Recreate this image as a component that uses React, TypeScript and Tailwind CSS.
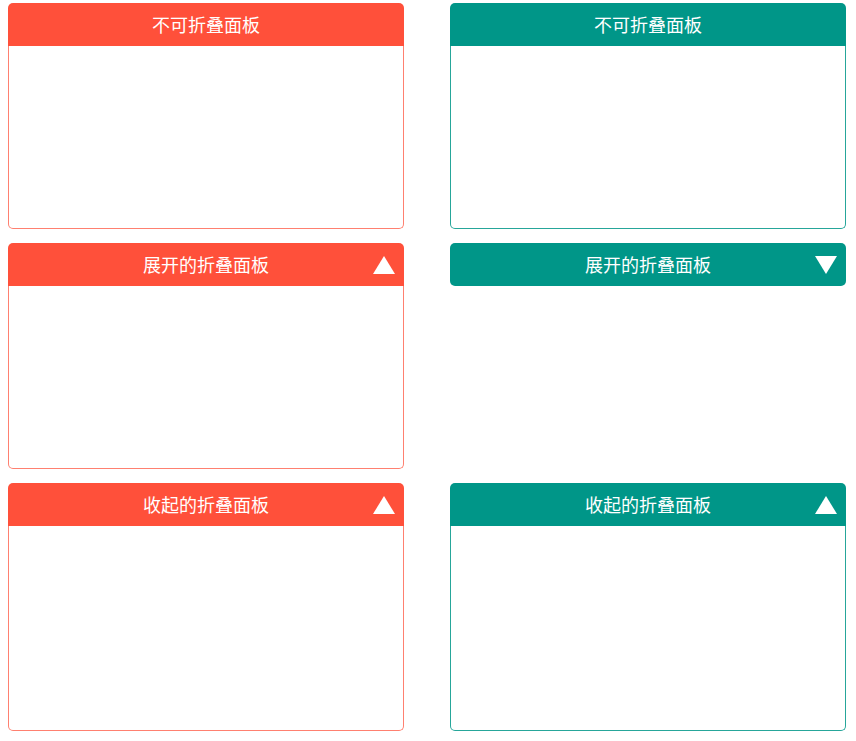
import React from 'react';

type Tone = 'red' | 'teal';

const TONES: Record<Tone, { head: string; border: string }> = {
  red: { head: 'bg-[#ff503a]', border: 'border-[#ff8070]' },
  teal: { head: 'bg-[#009688]', border: 'border-[#26a69a]' },
};

function Arrow({ dir }: { dir: 'up' | 'down' }) {
  return (
    <svg width="22" height="18" viewBox="0 0 22 18" className="absolute right-[9px] top-1/2 -translate-y-1/2">
      {dir === 'up' ? <polygon points="11,0 22,18 0,18" fill="#fff" /> : <polygon points="0,0 22,0 11,18" fill="#fff" />}
    </svg>
  );
}

function Panel({
  tone,
  title,
  arrow,
  open = true,
  bodyH,
}: {
  tone: Tone;
  title: string;
  arrow?: 'up' | 'down';
  open?: boolean;
  bodyH: string;
}) {
  const t = TONES[tone];
  return (
    <div>
      <div
        className={`relative flex h-[43px] items-center justify-center text-[18px] text-white ${t.head} ${open ? 'rounded-t-[5px]' : 'rounded-[5px]'}`}
        style={{ fontFamily: '"Noto Sans CJK SC", "Noto Sans", sans-serif' }}
      >
        {title}
        {arrow && <Arrow dir={arrow} />}
      </div>
      {open && <div className={`rounded-b-[5px] border-x border-b bg-white ${t.border} ${bodyH}`} />}
    </div>
  );
}

export default function App() {
  return (
    <div className="min-h-[741px] bg-white pl-2 pt-[3px]">
      <div className="grid grid-cols-[396px_396px] items-start gap-x-[46px] gap-y-[14px]">
        <Panel tone="red" title="不可折叠面板" bodyH="h-[183px]" />
        <Panel tone="teal" title="不可折叠面板" bodyH="h-[183px]" />
        <Panel tone="red" title="展开的折叠面板" arrow="up" bodyH="h-[183px]" />
        <Panel tone="teal" title="展开的折叠面板" arrow="down" open={false} bodyH="" />
        <Panel tone="red" title="收起的折叠面板" arrow="up" bodyH="h-[205px]" />
        <Panel tone="teal" title="收起的折叠面板" arrow="up" bodyH="h-[205px]" />
      </div>
    </div>
  );
}
